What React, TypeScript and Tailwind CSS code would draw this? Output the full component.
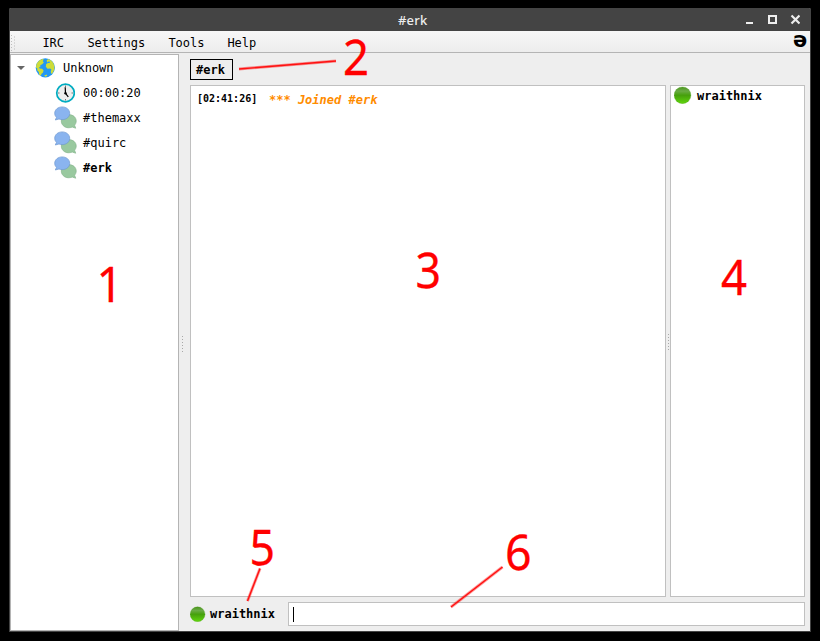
import React from "react";

const mono = "font-['DejaVu_Sans_Mono','Liberation_Mono',monospace]";

function Globe() {
  return (
    <svg className="h-5 w-5 shrink-0" viewBox="0 0 20 20">
      <circle cx="10.3" cy="9.8" r="9.6" fill="#2196f3" />
      <path d="M1.700 5.500 4.300 2.500l2.800-1.500 1.800.4-1.100 1.500 1 1.500-1.600 1.900-2 .9.300 1.300-1.500.9.600 1.200 2.500.2 1.500 1.800-.7 2.200-1.400 1-.7 1.900-1.700-1.100-.3-2.700-1.700-1.600.2-1.800L.9 9.500z" fill="#cddc39" />
      <path d="M11.600 2.500 13.100.9l3 1.500 2.100 2.300 1.200 3.600-.1 3.300-1.700 3.400-1.300 1-.6-2.300.7-2.300-1.300-1-2.600.3-1.700-2 .3-2.500 1.700-1.300 1.800.1.400-1.300-1.400-.1-1.300.9z" fill="#cddc39" />
      <path d="m9.200 17.600 2.300-1.100.9 1.200-2.100 1z" fill="#cddc39" />
    </svg>
  );
}

function Clock() {
  return (
    <svg className="h-5 w-5 shrink-0" viewBox="0 0 20 20">
      <circle cx="10.5" cy="10" r="8.800" fill="#eee" stroke="#00acc1" strokeWidth="1.700" />
      <path d="M10.500 2.500V4M10.500 16v1.500M3 10h1.500M16.500 10H18" stroke="#777" strokeWidth="1" />
      <path d="M10.200 4.200 10.500 10.300l2.800 3.500" fill="none" stroke="#000" strokeWidth="1.200" />
      <circle cx="10.500" cy="10.300" r="1.200" />
    </svg>
  );
}

function Chat() {
  return (
    <svg className="h-[23px] w-[23px] shrink-0" viewBox="0 0 23 23">
      <path d="M14.8 8.6c4.2 0 7.4 2.8 7.4 6.4 0 1.8-.7 3.1-1.6 4.2l1.1 3-3.4-1.1c-6 2.2-11-1.3-11-6.1 0-3.6 3.300-6.400 7.500-6.400z" fill="#99c99f" stroke="#85b58d" strokeWidth=".7" />
      <path d="M8.200.9C12.500.9 15.700 3.700 15.700 7.300s-3.200 6.300-7.500 6.300c-1.200 0-2.300-.2-3.200-.6L1.300 14l1.200-2.700C1.300 10.200.7 8.900.7 7.300.7 3.700 3.900.9 8.200.9z" fill="#8ab4ef" stroke="#6f98d0" strokeWidth=".7" />
    </svg>
  );
}

function Ball({ className }: { className: string }) {
  return (
    <svg className={className} viewBox="0 0 18 18">
      <defs>
        <linearGradient id="ball" x1="0" y1="0" x2="0" y2="1">
          <stop offset="0" stopColor="#4a951c" />
          <stop offset=".25" stopColor="#6aab45" />
          <stop offset=".5" stopColor="#46a00c" />
          <stop offset="1" stopColor="#61d60d" />
        </linearGradient>
      </defs>
      <circle cx="8.500" cy="9.300" r="8.400" fill="url(#ball)" stroke="#4c9c1c" strokeWidth=".3" />
    </svg>
  );
}

function Grip() {
  return (
    <div className="flex flex-col gap-[2px]">
      {[0, 1, 2, 3, 4, 5].map((i) => (
        <i key={i} className="h-px w-px bg-[#a8a8a8]" />
      ))}
    </div>
  );
}

const rows = [
  { label: "00:00:20", icon: <Clock />, bold: false },
  { label: "#themaxx", icon: <Chat />, bold: false },
  { label: "#quirc", icon: <Chat />, bold: false },
  { label: "#erk", icon: <Chat />, bold: true },
];

const notes = [
  { n: "1", at: "translate(96.500 302) scale(.94 1)" },
  { n: "2", at: "translate(343 74.500) scale(.93 1)" },
  { n: "3", at: "translate(415.500 288) scale(.91 1)" },
  { n: "4", at: "translate(721 295) scale(.93 1)" },
  { n: "5", at: "translate(249.500 564.500) scale(.91 1)" },
  { n: "6", at: "translate(505 570) scale(.95 1)" },
];

export default function App() {
  return (
    <div className={`relative h-[641px] w-[820px] overflow-hidden bg-black pt-2 pl-[9px] text-[12px] leading-[14px] text-black ${mono}`}>
      <div className="flex h-[624px] w-[802px] flex-col rounded-t-[2px] border-x border-b border-[#444] bg-[#eee]">
        <header className="-mx-px flex h-[23px] shrink-0 items-center rounded-t-[2px] bg-[#444] pl-[389px]">
          <span className="w-[332px] pt-px font-['Noto_Sans','Open_Sans',sans-serif] text-[13px] font-medium tracking-[.2px] text-[#eee]">#erk</span>
          <svg className="h-[23px] w-[70px]" viewBox="0 0 70 23" fill="none" stroke="#eee">
            <path d="M16 15h7" strokeWidth="2" />
            <path d="M39 8h7v7h-7z" strokeWidth="2" />
            <path d="m61.500 7.500 8 8m0-8-8 8" strokeWidth="2.200" />
          </svg>
        </header>
        <nav className="flex h-[22px] shrink-0 items-center border-b border-[#b4b4b4] bg-linear-to-b from-[#f7f7f7] to-[#ededed] pt-[2px] pr-1">
          <svg className="h-4 w-[32px]" viewBox="0 0 32 16">
            <path d="M1.500 0v16M4.500 1.500v14" stroke="#bdbdbd" strokeDasharray="1 2" />
          </svg>
          <span className="w-[45px] pl-[.4px]">IRC</span>
          <span className="w-[81px] pl-[.4px]">Settings</span>
          <span className="w-[59px] pl-[.4px]">Tools</span>
          <span className="grow pl-[.4px]">Help</span>
          <span className="-mt-[5px] w-[13px] font-['DejaVu_Sans',sans-serif] text-[21px] leading-[20px] font-bold">ə</span>
        </nav>
        <main className="flex min-h-0 grow pt-px">
          <aside className="flex w-[169px] shrink-0 flex-col border border-[#b4b4b4] bg-white">
            <div className="flex h-[25px] items-center pl-[6px]">
              <svg className="h-2 w-[18px]" viewBox="0 0 18 8"><path d="M0 2h8L4 6z" fill="#666" /></svg>
              <Globe />
              <span className="ml-2">Unknown</span>
            </div>
            {rows.map((r) => (
              <div key={r.label} className="flex h-[25px] items-center pl-[44px]">
                <span className="flex w-5 justify-center">{r.icon}</span>
                <span className="ml-2">{r.bold ? <b>{r.label}</b> : r.label}</span>
              </div>
            ))}
          </aside>
          <div className="flex w-[11px] shrink-0 justify-start pt-[282px] pl-[3px]"><Grip /></div>
          <section className="flex w-[615px] flex-col pt-[5px]">
            <div className="flex h-[21px] w-[43px] items-center border border-black pl-[5px] font-bold">#erk</div>
            <div className="mt-[5px] flex h-[512px] shrink-0">
              <div className="flex w-[476px] border border-[#c0c0c0] bg-white pt-[7px] pl-[6px] font-bold">
                <span className="w-[72px] text-[10px] leading-[12px]">[02:41:26]</span>
                <span className="text-[#ff8c00] italic">*** Joined #erk</span>
              </div>
              <div className="flex w-1 pt-[249px] pl-[2px]"><Grip /></div>
              <div className="w-[135px] border border-[#c0c0c0] bg-white pt-px pl-[3px]">
                <div className="flex items-center font-bold"><Ball className="-mt-px h-[18px] w-[18px]" /><span className="ml-[5px]">wraithnix</span></div>
              </div>
            </div>
            <div className="mt-[5px] flex h-6 items-center font-bold">
              <Ball className="-mt-px mr-1 h-4 w-4" />
              <span className="w-[78px]">wraithnix</span>
              <div className="flex h-6 grow items-center border border-[#c0c0c0] bg-white pl-1"><i className="h-[15px] w-px bg-black" /></div>
            </div>
          </section>
        </main>
      </div>
      <svg className="pointer-events-none absolute inset-0 h-[641px] w-[820px] font-['Noto_Sans',sans-serif] text-[49px]" viewBox="0 0 820 641">
        {["M239 69 336 61", "M260 568.500 247.500 601", "M502.500 567 451 607"].map((d) => (
          <g key={d} fill="none">
            <path d={d} stroke="#ff0000" strokeOpacity=".4" strokeWidth="3" />
            <path d={d} stroke="#ff1010" strokeWidth="1.400" />
          </g>
        ))}
        {notes.map((t) => <text key={t.n} transform={t.at} fill="red" stroke="red" strokeWidth=".3">{t.n}</text>)}
      </svg>
    </div>
  );
}
